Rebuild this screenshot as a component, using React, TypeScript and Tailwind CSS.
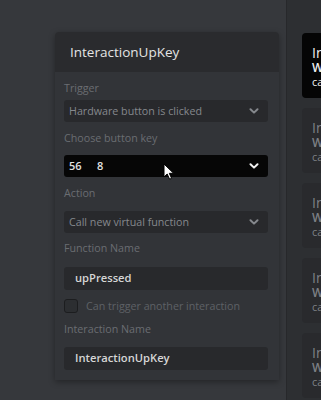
import React from "react";

const Chevron = ({ color }: { color: string }) => (
  <svg width="10" height="6" viewBox="0 0 10 6" fill="none">
    <path d="M1.5 1.2 L5 4.6 L8.5 1.2" stroke={color} strokeWidth="2" strokeLinecap="round" strokeLinejoin="round" />
  </svg>
);

const Label = ({ children, className = "" }: { children: React.ReactNode; className?: string }) => (
  <div className={`h-[16px] text-[10.7px] leading-[16px] text-[#6a6d72] ${className}`}>{children}</div>
);

const Select = ({ text, className = "" }: { text: string; className?: string }) => (
  <div className={`h-[22px] rounded-[3px] bg-[#28292c] flex items-center justify-between pl-[5px] pr-[9px] ${className}`}>
    <span className="text-[10.7px] text-[#85888d] font-medium">{text}</span>
    <Chevron color="#85888d" />
  </div>
);

const Card = ({ dark }: { dark?: boolean }) => (
  <div
    className={`h-[65px] w-[80px] shrink-0 rounded-[4px] pl-[10px] pt-[11px] flex flex-col whitespace-nowrap ${
      dark ? "bg-[#050505] text-[#f0f0f0]" : "bg-[#292a2d] text-[#7d8085]"
    }`}
  >
    <span className="text-[14px] leading-[17px] font-medium">In</span>
    <span className="text-[12px] leading-[14px] font-semibold">W</span>
    <span className="text-[11px] leading-[14px]">ca</span>
  </div>
);

export default function App() {
  return (
    <div
      className="w-[321px] h-[400px] overflow-hidden flex bg-[#36383c] relative"
      style={{ fontFamily: '"Open Sans", "Noto Sans", sans-serif' }}
    >
      <div className="w-[287px] shrink-0 border-r border-[#27282b] pl-[55px] pt-[32px]">
        <div className="w-[224px] rounded-t-[4px] overflow-hidden shadow-[0_2px_6px_rgba(0,0,0,0.35)]">
          <div className="h-[40px] bg-[#2a2b2e] flex items-center pl-[15px]">
            <span className="text-[13.5px] text-[#e4e4e4] font-medium">InteractionUpKey</span>
          </div>
          <div className="bg-[#323438] pl-[9px] pr-[11px] pt-[8px] pb-[10px] flex flex-col">
            <Label>Trigger</Label>
            <Select text="Hardware button is clicked" className="mt-[4px]" />
            <Label className="mt-[8px]">Choose button key</Label>
            <div className="mt-[9px] h-[22px] rounded-[3px] bg-[#060606] flex items-center justify-between pl-[5px] pr-[9px]">
              <span className="text-[11px] text-[#e2e2e2] font-semibold flex">
                <span className="w-[28px]">56</span>
                <span>8</span>
              </span>
              <Chevron color="#f2f2f2" />
            </div>
            <Label className="mt-[8px]">Action</Label>
            <Select text="Call new virtual function" className="mt-[10px]" />
            <Label className="mt-[7px]">Function Name</Label>
            <div className="mt-[11px] h-[23px] rounded-[3px] bg-[#28292c] flex items-center pl-[11px]">
              <span className="text-[11.2px] text-[#d6d6d6] font-semibold">upPressed</span>
            </div>
            <div className="mt-[9px] h-[14px] flex items-center">
              <div className="w-[14px] h-[14px] rounded-[3px] border-[1.5px] border-[#1c1d1f] bg-[#2c2e31]" />
              <span className="ml-[8px] text-[10.7px] text-[#5e6166] font-medium">Can trigger another interaction</span>
            </div>
            <Label className="mt-[8px]">Interaction Name</Label>
            <div className="mt-[10px] h-[23px] rounded-[3px] bg-[#28292c] flex items-center pl-[11px]">
              <span className="text-[11.2px] text-[#d6d6d6] font-semibold">InteractionUpKey</span>
            </div>
          </div>
        </div>
      </div>
      <div className="flex-1 min-w-0 overflow-hidden bg-[#2d2f32] pl-[15px] pt-[33px] flex flex-col gap-[10px]">
        <Card dark />
        <Card />
        <Card />
        <Card />
        <Card />
      </div>
      <svg className="absolute left-[163px] top-[163px]" width="12" height="18" viewBox="0 0 12 18">
        <path d="M1 1 L1 14 L4.2 11 L6.6 16.2 L8.6 15.3 L6.3 10.3 L10.6 10.3 Z" fill="#ffffff" stroke="#000000" strokeWidth="1" strokeLinejoin="round" />
      </svg>
    </div>
  );
}
